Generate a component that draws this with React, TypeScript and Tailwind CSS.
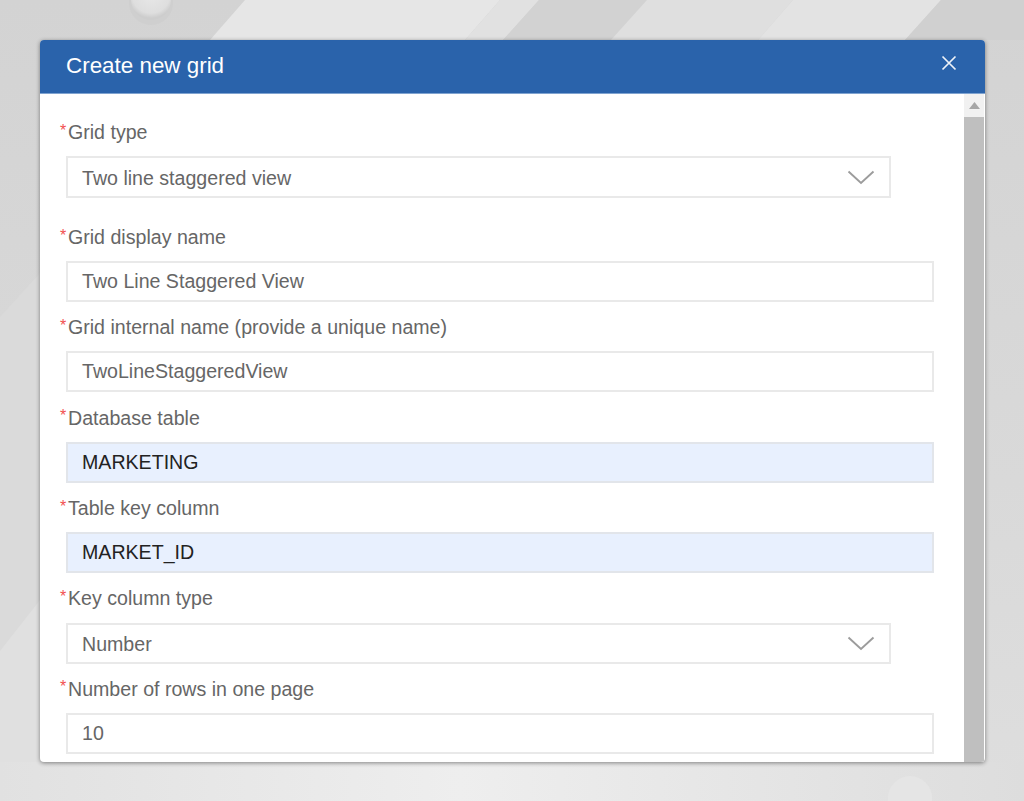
import React from 'react';

const font = "font-['Liberation_Sans',Arial,sans-serif]";

const Backdrop: React.FC = () => (
  <svg className="absolute inset-0 w-full h-full" viewBox="0 0 1024 801" preserveAspectRatio="none">
    <defs>
      <linearGradient id="base" x1="0" y1="0" x2="0" y2="1">
        <stop offset="0" stopColor="#d3d3d3" />
        <stop offset="0.6" stopColor="#d9d9d9" />
        <stop offset="1" stopColor="#dedede" />
      </linearGradient>
      <linearGradient id="floor" x1="0" y1="0" x2="1" y2="0">
        <stop offset="0" stopColor="#e1e1e1" />
        <stop offset="0.45" stopColor="#eeeeee" />
        <stop offset="1" stopColor="#dddddd" />
      </linearGradient>
      <radialGradient id="knob" cx="0.5" cy="0.35" r="0.6">
        <stop offset="0" stopColor="#e8e8e8" />
        <stop offset="0.8" stopColor="#dedede" />
        <stop offset="1" stopColor="#cdcdcd" />
      </radialGradient>
    </defs>
    <rect width="1024" height="801" fill="url(#base)" />
    <polygon points="245,0 500,0 465,40 210,40" fill="#e6e6e6" />
    <polygon points="500,0 539,0 503,40 465,40" fill="#e1e1e1" />
    <polygon points="539,0 647,0 611,40 503,40" fill="#d2d2d2" />
    <polygon points="647,0 793,0 758,40 611,40" fill="#dfdfdf" />
    <polygon points="793,0 941,0 905,40 758,40" fill="#e3e3e3" />
    <polygon points="941,0 1024,0 1024,40 905,40" fill="#d0d0d0" />
    <polygon points="0,317 40,273 40,600 0,651" fill="#dadada" />
    <polygon points="0,651 40,600 40,765 0,765" fill="#e0e0e0" />
    <rect y="762" width="1024" height="39" fill="url(#floor)" />
    <circle cx="151" cy="3" r="22" fill="#cfcfcf" />
    <circle cx="151" cy="0" r="20" fill="url(#knob)" />
    <circle cx="910" cy="798" r="22" fill="#e5e5e5" />
  </svg>
);

const Chevron: React.FC = () => (
  <svg width="28" height="15" viewBox="0 0 28 15" fill="none" stroke="#9c9c9c" strokeWidth="1.9">
    <path d="M1.5 1.5 L14 13 L26.5 1.5" />
  </svg>
);

type FieldProps = {
  label: string;
  value: string;
  select?: boolean;
  filled?: boolean;
  first?: boolean;
};

const Field: React.FC<FieldProps> = ({ label, value, select, filled, first }) => (
  <div className={first ? 'h-[105px]' : 'h-[90.4px]'}>
    <div className="h-[24px] flex items-center pl-[20px] text-[#666666]">
      <span className="w-[8px] text-[#f25050] text-[16px] leading-none -mt-[3px]">*</span>
      <span className="pt-[1px]">{label}</span>
    </div>
    <div
      className={`mt-[12px] ml-[26px] flex items-center justify-between pl-[14px] border-2 ${
        first ? 'h-[42px]' : 'h-[41px]'
      } ${select ? 'w-[825px] pr-[14px]' : 'w-[868px]'} ${
        filled
          ? 'bg-[#e8f0fe] border-[#e2e5ea] text-[#222222]'
          : 'bg-white border-[#e9e9e9] text-[#666666]'
      }`}
    >
      <span className={select ? 'pt-[3px]' : ''}>{value}</span>
      {select && <Chevron />}
    </div>
  </div>
);

const App: React.FC = () => {
  return (
    <div className={`relative h-[801px] w-[1024px] overflow-hidden pt-[40px] pl-[40px] ${font}`}>
      <Backdrop />
      <div className="relative w-[945px] h-[722px] flex flex-col rounded-[4px] overflow-hidden bg-white shadow-[0_1px_4px_rgba(0,0,0,0.45)]">
        {/* Header */}
        <div className="h-[54px] shrink-0 flex items-center justify-between pl-[26px] pr-[28px] bg-[#2a63ab] border-b border-[#7fa3d0] text-white">
          <span className="text-[22.4px] -mt-[2px]">Create new grid</span>
          <svg width="16" height="16" viewBox="0 0 16 16" className="-mt-[8px]" stroke="#ffffff" strokeWidth="1.7" opacity="0.92">
            <path d="M1.5 1.5 L14.5 14.5 M14.5 1.5 L1.5 14.5" />
          </svg>
        </div>

        <div className="flex flex-1 min-h-0">
          {/* Form */}
          <div className="flex-1 min-w-0 pt-[26px] text-[19.6px] overflow-hidden">
            <Field first select label="Grid type" value="Two line staggered view" />
            <Field label="Grid display name" value="Two Line Staggered View" />
            <Field label="Grid internal name (provide a unique name)" value="TwoLineStaggeredView" />
            <Field filled label="Database table" value="MARKETING" />
            <Field filled label="Table key column" value="MARKET_ID" />
            <Field select label="Key column type" value="Number" />
            <Field label="Number of rows in one page" value="10" />
          </div>

          {/* Scrollbar */}
          <div className="w-[20px] mr-[1px] shrink-0 flex flex-col bg-[#f1f1f1]">
            <div className="h-[23px] flex items-center justify-center">
              <svg width="11" height="7" viewBox="0 0 11 7" fill="#a6a6a6">
                <polygon points="5.5,0 11,7 0,7" />
              </svg>
            </div>
            <div className="flex-1 bg-[#bfbfbf]" />
          </div>
        </div>
      </div>
    </div>
  );
};

export default App;
